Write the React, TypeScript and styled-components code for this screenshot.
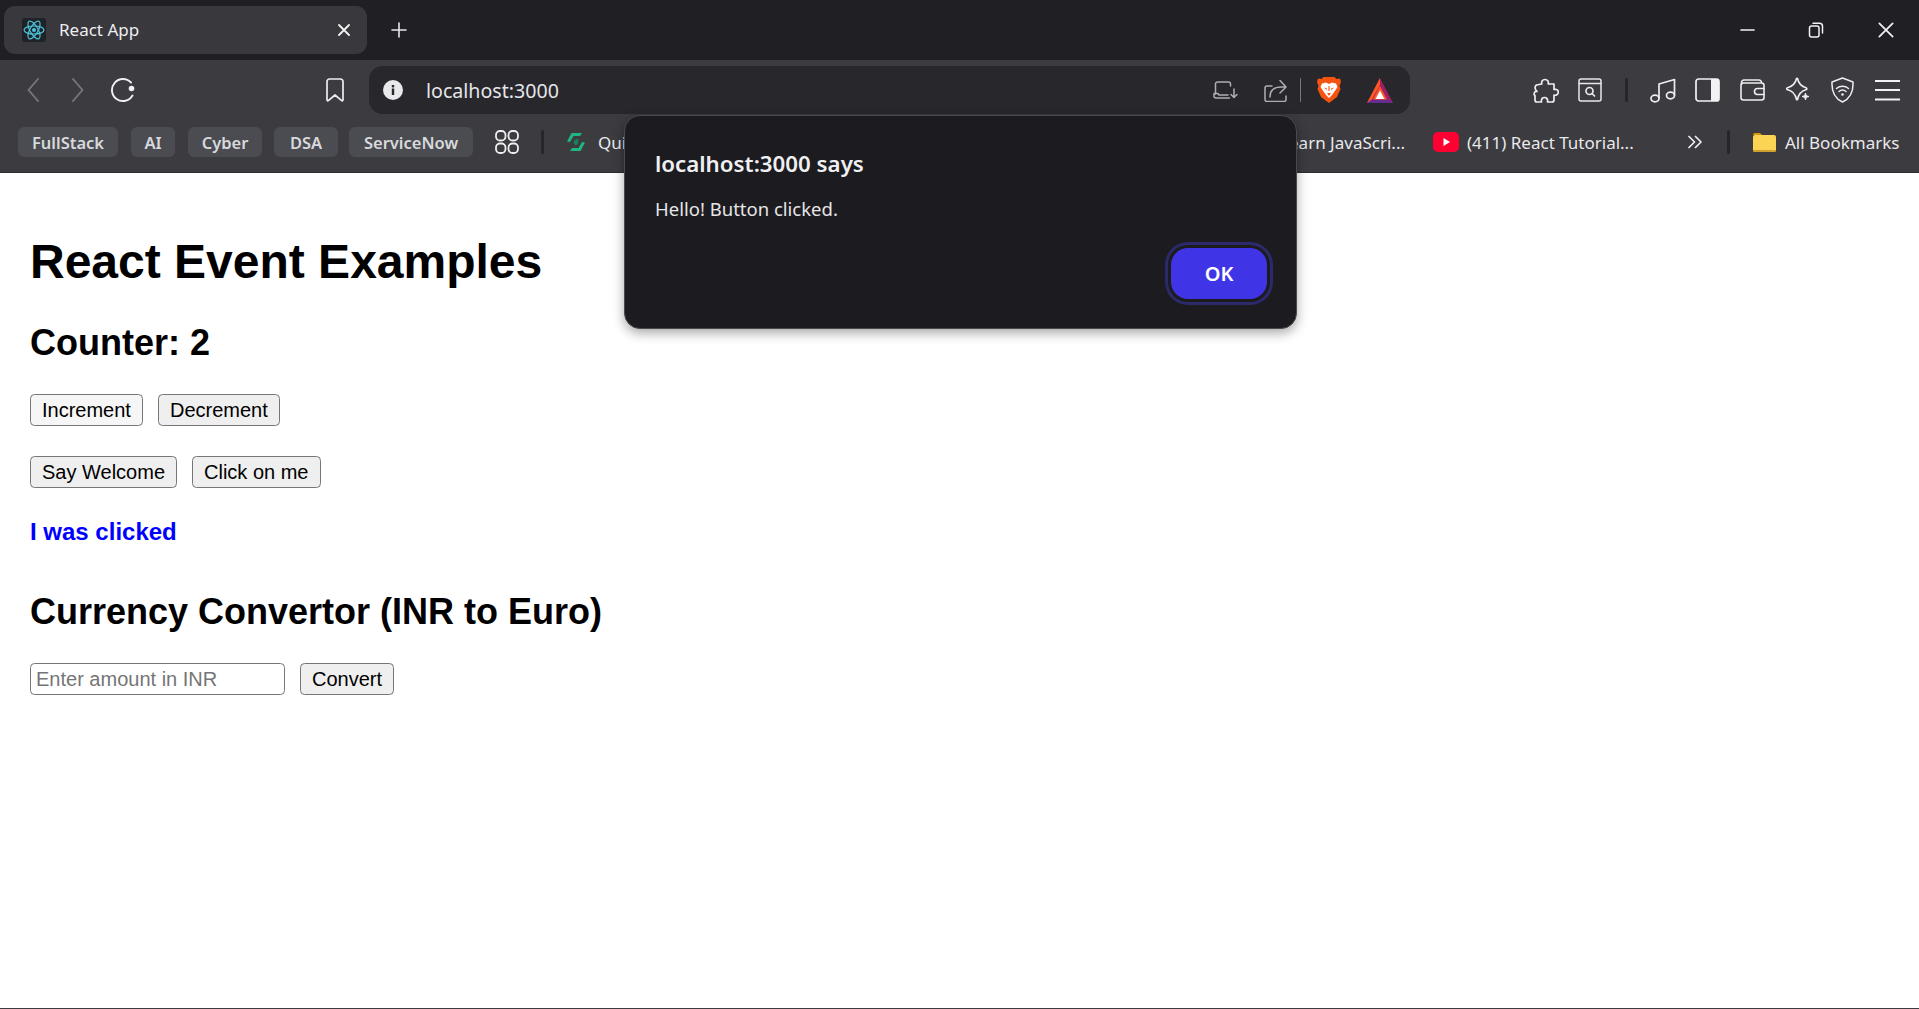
import React from 'react';
import styled, { createGlobalStyle } from 'styled-components';

const GlobalStyle = createGlobalStyle`
  html, body {
    margin: 0;
    padding: 0;
    height: 100%;
    background: #fff;
  }
  #root {
    height: 100%;
  }
`;

const uiFont = `"Noto Sans", "Open Sans", sans-serif`;
const pageFont = `"Liberation Sans", Arial, sans-serif`;

const Frame = styled.div`
  position: relative;
  width: 1919px;
  height: 1009px;
  overflow: hidden;
  display: flex;
  flex-direction: column;
  background: #fff;
`;

const TabStrip = styled.div`
  flex: none;
  height: 60px;
  display: flex;
  align-items: center;
  padding: 0 25px 0 4px;
  background: #1f1f24;
`;

const Tab = styled.div`
  width: 363px;
  height: 48px;
  display: flex;
  align-items: center;
  padding: 0 17px 0 18px;
  box-sizing: border-box;
  border-radius: 11px;
  background: #38383d;
`;

const TabTitle = styled.span`
  margin: 0 0 2px 13px;
  flex: 1;
  font: 400 17px ${uiFont};
  color: #eeeef0;
`;

const Favicon = styled.span`
  width: 24px;
  height: 24px;
  display: flex;
  border-radius: 3px;
  background: #1e2327;
`;

const Slot = styled.span<{ $ml?: number; $auto?: boolean }>`
  flex: none;
  display: flex;
  align-items: center;
  justify-content: center;
  margin-left: ${(p) => (p.$auto ? 'auto' : `${p.$ml ?? 0}px`)};
`;

const Toolbar = styled.div`
  flex: none;
  height: 58px;
  display: flex;
  align-items: center;
  padding: 2px 0 0 27px;
  box-sizing: border-box;
  background: #3b3b40;
`;

const AddressBar = styled.div`
  width: 1041px;
  height: 48px;
  margin-left: 25px;
  display: flex;
  align-items: center;
  padding: 0 17px 0 14px;
  box-sizing: border-box;
  border-radius: 14px;
  background: #27272c;
`;

const Url = styled.span`
  margin-left: 23px;
  font: 400 19.6px ${uiFont};
  color: #e6e6e9;
`;

const Divider = styled.span<{ $ml: number; $color: string; $h: number; $w?: number }>`
  flex: none;
  width: ${(p) => p.$w ?? 3}px;
  height: ${(p) => p.$h}px;
  margin-left: ${(p) => p.$ml}px;
  border-radius: 2px;
  background: ${(p) => p.$color};
`;

const BookmarksBar = styled.div`
  flex: none;
  height: 55px;
  display: flex;
  align-items: center;
  padding: 0 21px 6px 18px;
  box-sizing: border-box;
  border-bottom: 1px solid #2c2c31;
  background: #3b3b40;
`;

const Chip = styled.span<{ $w: number; $ml?: number }>`
  flex: none;
  width: ${(p) => p.$w}px;
  height: 30px;
  margin-left: ${(p) => p.$ml ?? 0}px;
  display: flex;
  align-items: center;
  justify-content: center;
  border-radius: 6px;
  background: #4b4c51;
  font: 600 16.5px ${uiFont};
  color: #d8d9dc;
`;

const BookmarkLabel = styled.span<{ $ml?: number; $w?: number }>`
  flex: none;
  width: ${(p) => (p.$w ? `${p.$w}px` : 'auto')};
  margin-left: ${(p) => p.$ml ?? 0}px;
  font: 400 17px ${uiFont};
  color: #e9e9eb;
  white-space: nowrap;
`;

const Page = styled.main`
  flex: 1;
  padding: 30px;
  border-bottom: 1px solid #3b3b40;
  font-family: ${pageFont};
  color: #000;
`;

const Heading = styled.h1`
  margin: 31px 0 33px;
  font-size: 48px;
  font-weight: 700;
`;

const Subheading = styled.h2`
  margin: 30px 0;
  font-size: 36px;
  font-weight: 700;
`;

const ButtonRow = styled.div`
  display: flex;
  align-items: center;
  gap: 15px;
  margin-bottom: 30px;
`;

const PageButton = styled.button<{ $light?: boolean }>`
  height: 32px;
  padding: 0 11px;
  box-sizing: border-box;
  border: 1.5px solid #767676;
  border-radius: 4.5px;
  background: ${(p) => (p.$light ? '#f6f6f6' : '#efefef')};
  font: 400 20px ${pageFont};
  color: #000;
`;

const AmountInput = styled.input`
  width: 255px;
  height: 32px;
  padding: 0 5px;
  box-sizing: border-box;
  border: 1.5px solid #767676;
  border-radius: 4.5px;
  background: #fff;
  font: 400 20px ${pageFont};
  &::placeholder {
    color: #757575;
    opacity: 1;
  }
`;

const ClickedNote = styled.p`
  margin: 0 0 45px;
  font-size: 24px;
  font-weight: 700;
  color: #0000ff;
`;

const Dialog = styled.div`
  position: absolute;
  left: 624px;
  top: 115px;
  width: 673px;
  height: 214px;
  padding: 34px 29px 0 30px;
  box-sizing: border-box;
  display: flex;
  flex-direction: column;
  border-radius: 16px;
  border: 1px solid #4a4a4e;
  background: #1b1b20;
  box-shadow: 0 4px 12px rgba(0, 0, 0, 0.35);
  font-family: ${uiFont};
`;

const DialogTitle = styled.div`
  font-size: 22.3px;
  font-weight: 600;
  line-height: 28px;
  color: #f0f0f2;
`;

const DialogText = styled.div`
  margin-top: 17px;
  font-size: 18.5px;
  line-height: 28px;
  color: #e6e6e8;
`;

const DialogActions = styled.div`
  margin-top: 25px;
  display: flex;
  justify-content: flex-end;
`;

const OkButton = styled.button`
  width: 96px;
  height: 51px;
  padding: 0;
  border: none;
  border-radius: 17px;
  background: #4035e6;
  box-shadow: 0 0 0 3px #1b1b20, 0 0 0 6px #2c2a6b;
  font: 600 20px ${uiFont};
  color: #fff;
`;

const stroke = (color: string, width: number) => ({
  fill: 'none',
  stroke: color,
  strokeWidth: width,
  strokeLinecap: 'round' as const,
  strokeLinejoin: 'round' as const,
});

const ReactLogo = () => (
  <svg width="24" height="24" viewBox="0 0 24 24">
    <g {...stroke('#4fc3dd', 1.2)}>
      <ellipse cx="12" cy="12" rx="10" ry="4" />
      <ellipse cx="12" cy="12" rx="10" ry="4" transform="rotate(60 12 12)" />
      <ellipse cx="12" cy="12" rx="10" ry="4" transform="rotate(120 12 12)" />
    </g>
    <circle cx="12" cy="12" r="2" fill="#4fc3dd" />
  </svg>
);

const CloseIcon = ({ size, width }: { size: number; width: number }) => (
  <svg width={size} height={size} viewBox="0 0 12 12">
    <path d="M1 1 11 11M11 1 1 11" {...stroke('#f2f2f4', width)} />
  </svg>
);

const PlusIcon = () => (
  <svg width="16" height="16" viewBox="0 0 16 16">
    <path d="M8 1v14M1 8h14" {...stroke('#e8e8ea', 1.6)} />
  </svg>
);

const MinimizeIcon = () => (
  <svg width="15" height="14" viewBox="0 0 15 14">
    <path d="M1 7h13" {...stroke('#f2f2f4', 1.6)} />
  </svg>
);

const RestoreIcon = () => (
  <svg width="16" height="16" viewBox="0 0 16 16">
    <rect x="1.5" y="4" width="9.5" height="11" rx="2" {...stroke('#f2f2f4', 1.5)} />
    <path d="M5 1.2h6.5a3 3 0 0 1 3 3V11" {...stroke('#f2f2f4', 1.5)} />
  </svg>
);

const Chevron = ({ left }: { left?: boolean }) => (
  <svg width="12" height="24" viewBox="0 0 12 24">
    <path d={left ? 'M11 1 1.5 12 11 23' : 'M1 1 10.5 12 1 23'} {...stroke('#77777b', 1.9)} />
  </svg>
);

const ReloadIcon = () => (
  <svg width="25" height="25" viewBox="0 0 25 25">
    <path d="M21 4.5A11 11 0 1 0 22.5 17.5" {...stroke('#f0f0f2', 1.9)} />
    <circle cx="21.5" cy="10.5" r="2.8" fill="#f0f0f2" />
  </svg>
);

const BookmarkIcon = () => (
  <svg width="18" height="24" viewBox="0 0 18 24">
    <path d="M3.5 1h11A2.5 2.5 0 0 1 17 3.5V22a.8.8 0 0 1-1.3.6L9 17l-6.700 5.600A.8.800 0 0 1 1 22V3.500A2.500 2.500 0 0 1 3.500 1Z" {...stroke('#eeeef0', 1.7)} />
  </svg>
);

const InfoIcon = () => (
  <svg width="20" height="20" viewBox="0 0 20 20">
    <circle cx="10" cy="10" r="10" fill="#e9e9eb" />
    <rect x="8.800" y="8.500" width="2.400" height="6.500" fill="#27272c" />
    <rect x="8.800" y="5" width="2.400" height="2.400" fill="#27272c" />
  </svg>
);

const LaptopIcon = () => (
  <svg width="25" height="18" viewBox="0 0 25 18">
    <path d="M2.500 13V3a2 2 0 0 1 2-2h11a2 2 0 0 1 2 2v2" {...stroke('#aeaeb2', 1.500)} />
    <path d="M1 12.500v2.500a2 2 0 0 0 2 2h13.500M1 12.500h4l1 1.500h9" {...stroke('#aeaeb2', 1.500)} />
    <path d="M21 8v8M18 13.500 21 16.500 24 13.500" {...stroke('#aeaeb2', 1.500)} />
  </svg>
);

const ShareIcon = () => (
  <svg width="23" height="23" viewBox="0 0 23 23">
    <path d="M8 7H3a2 2 0 0 0-2 2v11.500a2 2 0 0 0 2 2h17a2 2 0 0 0 2-2V17" {...stroke('#aeaeb2', 1.500)} />
    <path d="M6 18c0-7 4-10 11-10h5M16 1.500 22 8l-6 6" {...stroke('#aeaeb2', 1.500)} />
  </svg>
);

const BraveIcon = () => (
  <svg width="24" height="26" viewBox="0 0 24 26">
    <path d="M6.500 0h11L19.500 2 23 1.500 24 5 22.500 9 23.500 12 20 20 12 26 4 20 .5 12 1.500 9 0 5 1 1.500 4.500 2Z" fill="#f4540f" />
    <path d="M5 6.500 9 5.500 12 7 15 5.500 19 6.500 20.500 10 17.500 14.500 15 18 12 21 9 18 6.500 14.500 3.500 10Z" fill="#fff" />
    <path d="M7 10.500 10 11.500 9.500 13ZM17 10.500 14 11.500 14.500 13ZM10 16h4L12 19Z" fill="#f4540f" />
    <path d="M11 9h2v5h-2Z" fill="#f4540f" opacity="0.55" />
  </svg>
);

const BatIcon = () => (
  <svg width="26" height="25" viewBox="0 0 26 25">
    <path d="M13 0 0 25h26Z" fill="#9e1f63" />
    <path d="M13 0 0 25 5 21.500 13 7Z" fill="#ff5722" />
    <path d="M0 25h26l-5-3.500H5Z" fill="#662d91" />
    <path d="M13 8 6 21.500h14Z" fill="#ff5722" />
    <path d="M13 12.500 8.500 21h9Z" fill="#fff" />
  </svg>
);

const PuzzleIcon = () => (
  <svg width="26" height="25" viewBox="0 0 26 25">
    <path d="M12 1.500c2.500 0 3.800 2 3.200 4.500H21v5.500c2.800-.8 4.500.8 4.200 3-.3 2.200-2 3.200-4.200 2.500v5a2 2 0 0 1-2 2h-4.500c.5-3-1-4.500-3-4.500s-3.500 1.500-3 4.500H4a2 2 0 0 1-2-2v-4.500C.5 17 .8 13 4 13.500c-3-3 -2-5.500-.5-6.500L8.800 6C8.200 3.500 9.500 1.500 12 1.500Z" {...stroke('#eeeef0', 1.700)} />
  </svg>
);

const SearchWindowIcon = () => (
  <svg width="24" height="24" viewBox="0 0 24 24">
    <rect x="1" y="1" width="22" height="22" rx="2" {...stroke('#e8e8ea', 1.500)} />
    <path d="M1 5.500h22" {...stroke('#e8e8ea', 1.500)} />
    <circle cx="11.500" cy="13" r="3.500" {...stroke('#e8e8ea', 1.700)} />
    <path d="M14 15.500 16.500 18" {...stroke('#e8e8ea', 1.700)} />
  </svg>
);

const MusicIcon = () => (
  <svg width="26" height="25" viewBox="0 0 26 25">
    <ellipse cx="5" cy="20.500" rx="4" ry="3.300" {...stroke('#eeeef0', 1.700)} />
    <ellipse cx="20.500" cy="17.500" rx="4" ry="3.300" {...stroke('#eeeef0', 1.700)} />
    <path d="M9 20V6l15.500-4.500v15.500" {...stroke('#eeeef0', 1.700)} />
  </svg>
);

const SidePanelIcon = () => (
  <svg width="25" height="24" viewBox="0 0 25 24">
    <rect x="1" y="1" width="23" height="22" rx="2.500" {...stroke('#f2f2f4', 1.700)} />
    <path d="M16 1h5.500A2.500 2.500 0 0 1 24 3.500v17a2.500 2.500 0 0 1-2.500 2.500H16Z" fill="#f2f2f4" />
  </svg>
);

const WalletIcon = () => (
  <svg width="25" height="22" viewBox="0 0 25 22">
    <rect x="1" y="4" width="23" height="17" rx="2.500" {...stroke('#eeeef0', 1.600)} />
    <path d="M1.500 5V3.500A2.500 2.500 0 0 1 4 1h15a2.500 2.500 0 0 1 2.500 2.500" {...stroke('#eeeef0', 1.600)} />
    <path d="M24 9.500h-6.500a2.500 2.500 0 0 0 0 6H24" {...stroke('#eeeef0', 1.600)} />
  </svg>
);

const SparkleIcon = () => (
  <svg width="26" height="26" viewBox="0 0 26 26">
    <path d="M12 1.500c1 5 3.500 8 9 9.500a1 1 0 0 1 0 1.500c-5.500 1.500-8 4.500-9 10a1 1 0 0 1-1 0c-1-5.500-3.500-8.500-9.500-10a1 1 0 0 1 0-1.500c6-1.500 8.500-4.500 9.500-9.500a1 1 0 0 1 1 0Z" {...stroke('#eeeef0', 1.600)} transform="translate(0.500 0)" />
    <path d="M20.500 16c.4 2.300 1.200 3.100 3.500 3.500-2.300.4-3.100 1.200-3.500 3.500-.4-2.300-1.200-3.100-3.500-3.500 2.300-.4 3.100-1.200 3.500-3.500Z" fill="#eeeef0" stroke="#eeeef0" />
  </svg>
);

const ShieldWifiIcon = () => (
  <svg width="23" height="26" viewBox="0 0 23 26">
    <path d="M11.500 1 22 5c.5 9-2 16-10.500 20C3 21 .5 14 1 5Z" {...stroke('#eeeef0', 1.500)} />
    <path d="M5.500 11.500c3.500-3 8.500-3 12 0M8 14.500c2-1.700 5-1.700 7 0" {...stroke('#eeeef0', 1.500)} />
    <circle cx="11.500" cy="17.500" r="1.300" fill="#eeeef0" />
  </svg>
);

const MenuIcon = () => (
  <svg width="25" height="22" viewBox="0 0 25 22">
    <path d="M0 2h25M0 11h25M0 20.500h25" fill="none" stroke="#f2f2f4" strokeWidth="1.800" />
  </svg>
);

const AppsIcon = () => (
  <svg width="24" height="24" viewBox="0 0 24 24">
    <g {...stroke('#eeeef0', 1.800)}>
      <rect x="1" y="1" width="9.500" height="9.500" rx="4" />
      <rect x="13.500" y="1" width="9.500" height="9.500" rx="4" />
      <rect x="1" y="13.500" width="9.500" height="9.500" rx="4" />
      <rect x="13.500" y="13.500" width="9.500" height="9.500" rx="4" />
    </g>
  </svg>
);

const QuickLogo = () => (
  <svg width="20" height="20" viewBox="0 0 20 20">
    <path d="M5.500 1h10.500l-2 3H7.500L4 10 1 9.500Z" fill="#1fb57f" />
    <path d="M14.500 19H4l2-3h6.500L16 10l3 .5Z" fill="#1fb57f" />
    <path d="M12.500 6.500 12 12l-2.500 1.500L7.500 11l1-3Z" fill="#17805c" />
  </svg>
);

const YoutubeIcon = () => (
  <svg width="26" height="20" viewBox="0 0 26 20">
    <rect width="26" height="20" rx="5" fill="#ff0033" />
    <path d="M10.500 6v8l6.500-4Z" fill="#fff" />
  </svg>
);

const DoubleChevron = () => (
  <svg width="14" height="14" viewBox="0 0 14 14">
    <path d="M1 1.500 6.500 7 1 12.500M7.500 1.500 13 7l-5.500 5.500" {...stroke('#eeeef0', 1.700)} />
  </svg>
);

const FolderIcon = () => (
  <svg width="23" height="19" viewBox="0 0 23 19">
    <path d="M0 2a2 2 0 0 1 2-2h5l2 2h-9Z" fill="#d8960f" />
    <rect y="2" width="23" height="17" rx="2" fill="#fcd453" />
    <path d="M0 17h23a2 2 0 0 1-2 2H2a2 2 0 0 1-2-2Z" fill="#cfa030" />
  </svg>
);

const App: React.FC = () => {
  return (
    <Frame>
      <GlobalStyle />
      <TabStrip>
        <Tab>
          <Favicon><ReactLogo /></Favicon>
          <TabTitle>React App</TabTitle>
          <CloseIcon size={12} width={1.8} />
        </Tab>
        <Slot $ml={24}><PlusIcon /></Slot>
        <Slot $auto><MinimizeIcon /></Slot>
        <Slot $ml={53}><RestoreIcon /></Slot>
        <Slot $ml={54}><CloseIcon size={16} width={1.3} /></Slot>
      </TabStrip>

      <Toolbar>
        <Slot><Chevron left /></Slot>
        <Slot $ml={33}><Chevron /></Slot>
        <Slot $ml={26}><ReloadIcon /></Slot>
        <Slot $ml={191}><BookmarkIcon /></Slot>
        <AddressBar>
          <InfoIcon />
          <Url>localhost:3000</Url>
          <Slot $auto><LaptopIcon /></Slot>
          <Slot $ml={26}><ShareIcon /></Slot>
          <Divider $ml={13} $color="#77777b" $h={24} $w={1.5} />
          <Slot $ml={16}><BraveIcon /></Slot>
          <Slot $ml={26}><BatIcon /></Slot>
        </AddressBar>
        <Slot $ml={123}><PuzzleIcon /></Slot>
        <Slot $ml={19}><SearchWindowIcon /></Slot>
        <Divider $ml={23} $color="#25252a" $h={24} />
        <Slot $ml={22}><MusicIcon /></Slot>
        <Slot $ml={19}><SidePanelIcon /></Slot>
        <Slot $ml={20}><WalletIcon /></Slot>
        <Slot $ml={20}><SparkleIcon /></Slot>
        <Slot $ml={20}><ShieldWifiIcon /></Slot>
        <Slot $ml={21}><MenuIcon /></Slot>
      </Toolbar>

      <BookmarksBar>
        <Chip $w={100}>FullStack</Chip>
        <Chip $w={44} $ml={13}>AI</Chip>
        <Chip $w={74} $ml={13}>Cyber</Chip>
        <Chip $w={64} $ml={12}>DSA</Chip>
        <Chip $w={124} $ml={11}>ServiceNow</Chip>
        <Slot $ml={22}><AppsIcon /></Slot>
        <Divider $ml={22} $color="#25252a" $h={24} />
        <Slot $ml={22}><QuickLogo /></Slot>
        <BookmarkLabel $ml={12}>Quick</BookmarkLabel>
        <Slot $auto><BookmarkLabel>Learn JavaScri...</BookmarkLabel></Slot>
        <Slot $ml={28}><YoutubeIcon /></Slot>
        <BookmarkLabel $ml={8} $w={166}>(411) React Tutorial...</BookmarkLabel>
        <Slot $ml={55}><DoubleChevron /></Slot>
        <Divider $ml={25} $color="#25252a" $h={24} />
        <Slot $ml={23}><FolderIcon /></Slot>
        <BookmarkLabel $ml={9} $w={113}>All Bookmarks</BookmarkLabel>
      </BookmarksBar>

      <Page>
        <Heading>React Event Examples</Heading>
        <Subheading>Counter: 2</Subheading>
        <ButtonRow>
          <PageButton $light>Increment</PageButton>
          <PageButton>Decrement</PageButton>
        </ButtonRow>
        <ButtonRow>
          <PageButton>Say Welcome</PageButton>
          <PageButton>Click on me</PageButton>
        </ButtonRow>
        <ClickedNote>I was clicked</ClickedNote>
        <Subheading>Currency Convertor (INR to Euro)</Subheading>
        <ButtonRow>
          <AmountInput placeholder="Enter amount in INR" />
          <PageButton>Convert</PageButton>
        </ButtonRow>
      </Page>

      <Dialog>
        <DialogTitle>localhost:3000 says</DialogTitle>
        <DialogText>Hello! Button clicked.</DialogText>
        <DialogActions>
          <OkButton>OK</OkButton>
        </DialogActions>
      </Dialog>
    </Frame>
  );
};

export default App;
